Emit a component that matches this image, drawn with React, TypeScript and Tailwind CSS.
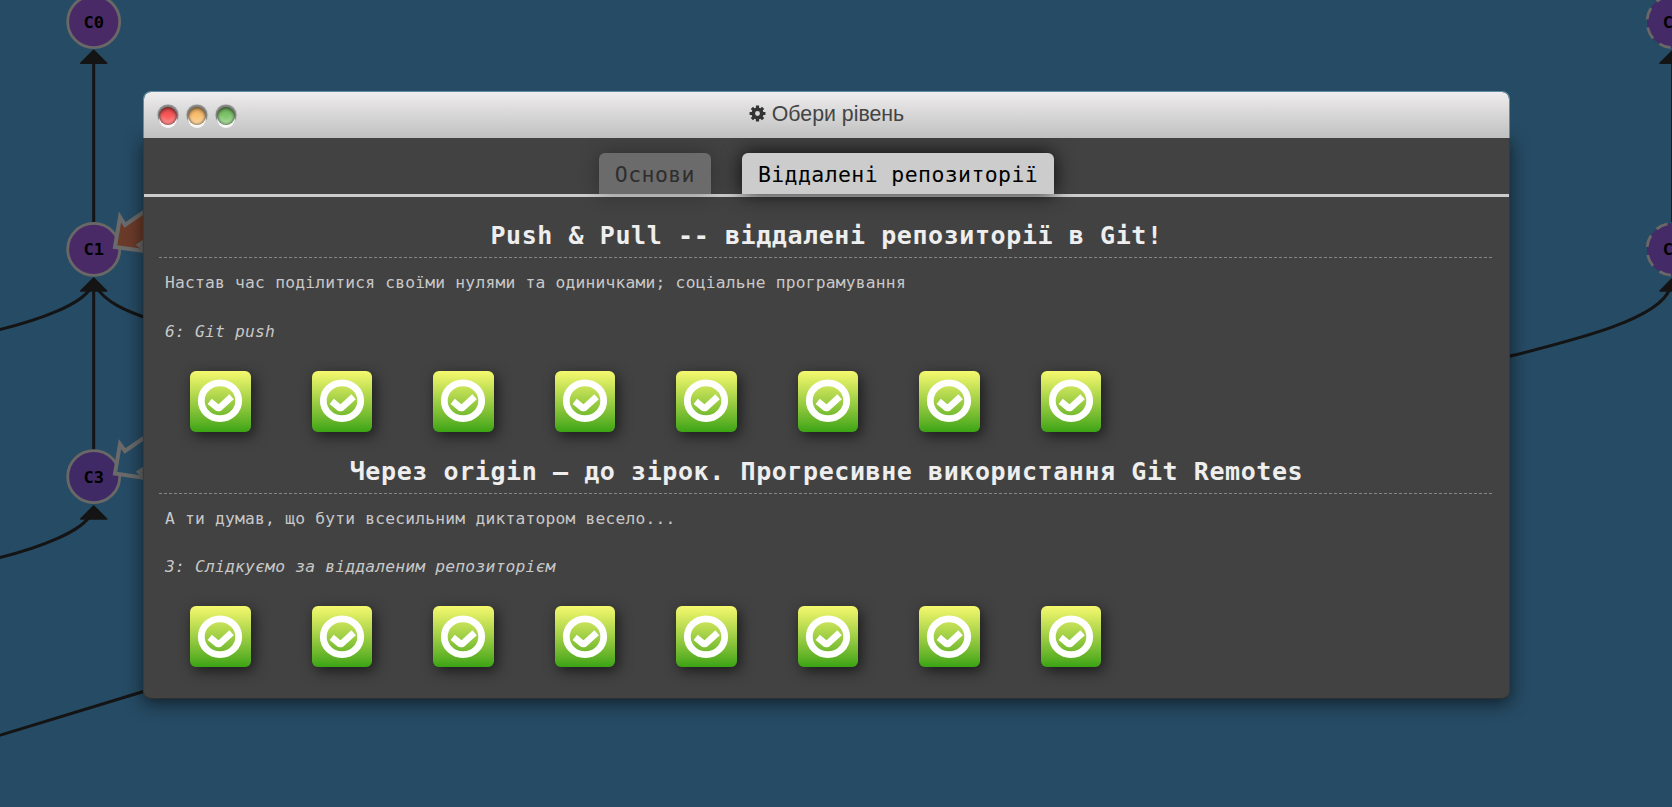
import React from "react";

const TABS = [
  { label: "Основи", active: false },
  { label: "Віддалені репозиторії", active: true },
];

const SERIES = [
  {
    title: "Push & Pull -- віддалені репозиторії в Git!",
    about: "Настав час поділитися своїми нулями та одиничками; соціальне програмування",
    status: "6: Git push",
    levels: 8,
  },
  {
    title: "Через origin – до зірок. Прогресивне використання Git Remotes",
    about: "А ти думав, що бути всесильним диктатором весело...",
    status: "3: Слідкуємо за віддаленим репозиторієм",
    levels: 8,
  },
];

type CommitProps = { x: number; y: number; label: string; fill: string; dashed?: boolean };

function Commit({ x, y, label, fill, dashed = false }: CommitProps) {
  return (
    <g>
      <circle cx={x} cy={y} r={26} fill={fill} stroke="#696867" strokeWidth={2.8} strokeDasharray={dashed ? "12 8.42" : undefined} strokeDashoffset={dashed ? -2 : undefined} />
      <text x={x} y={y + 6} textAnchor="middle" fontSize={15.5} fontWeight="bold" textLength={20.5} lengthAdjust="spacingAndGlyphs" fill="#000">
        {label}
      </text>
    </g>
  );
}

function Head({ x, y }: { x: number; y: number }) {
  return <path d={`M${x} ${y}L${x + 13} ${y + 13}H${x - 13}Z`} fill="#141414" stroke="#141414" strokeWidth={1.6} strokeLinejoin="round" />;
}

function Graph() {
  return (
    <svg className="absolute inset-0 h-[807px] w-[1672px] font-['DejaVu_Sans_Mono',monospace]" viewBox="0 0 1672 807">
      <g fill="none" stroke="#141414" strokeWidth={3}>
        <path d="M93.7 60V222M93.7 290V450" />
        <path d="M-4 330.5C40 320 83 304 91 287" />
        <path d="M96 287C106 302 125 311 150 319" />
        <path d="M-4 558.5C40 548 83 531 91 514" />
        <path d="M-4 736.5L150 689.5" />
        <path d="M1505 357.5C1570 341 1660 320 1670 288" />
        <path d="M1672.7 60V222" />
      </g>
      <Head x={93.7} y={50.3} />
      <Head x={93.7} y={278} />
      <Head x={93.7} y={506} />
      <Head x={1673} y={50.3} />
      <Head x={1673} y={278} />
      <Commit x={93.7} y={21.7} label="C0" fill="#4a2a66" />
      <Commit x={93.7} y={249.3} label="C1" fill="#4a2a66" />
      <Commit x={93.7} y={476.7} label="C3" fill="#402a66" />
      <Commit x={1673} y={21.7} label="C0" fill="#442a66" dashed />
      <Commit x={1673} y={249.3} label="C1" fill="#442a66" dashed />
      <path d="M152 206.5L125 225L120 217L115 247L152 252" fill="#6b3b2a" stroke="#6a6a6a" strokeWidth={4} />
      <path d="M152 236L139 245L150 255" fill="none" stroke="#6a6a6a" strokeWidth={4} />
      <path d="M152 432.5L125 451L120 444L115 473.5L152 479" fill="#264b64" stroke="#6a6a6a" strokeWidth={4} />
      <path d="M152 463L139 472L150 482" fill="none" stroke="#6a6a6a" strokeWidth={4} />
    </svg>
  );
}

function CheckTile() {
  return (
    <div className="flex h-[61.3px] w-[60.5px] items-center justify-center rounded-md bg-linear-to-b from-[#f6f96e] to-[#39a413] shadow-[3px_4px_14px_rgba(0,0,0,0.6)]">
      <svg className="size-[46px]" viewBox="0 0 46 46" fill="none" stroke="#fff">
        <ellipse cx="23" cy="22.7" rx="18.7" ry="17.9" strokeWidth="6.8" />
        <path d="M12.7 23.4L20.6 29.9H22.4L34.6 18.7" strokeWidth="6.6" strokeLinejoin="round" />
      </svg>
    </div>
  );
}

const TEETH = [0, 45, 90, 135];

function Cog() {
  return (
    <svg className="mb-1 size-[17px] text-[#333]" viewBox="0 0 18 18" stroke="currentColor" fill="none">
      <circle cx="9" cy="9" r="4.5" strokeWidth="3.8" />
      {TEETH.map((angle) => (
        <path key={angle} d="M9 .6V3.6M9 14.4V17.4" strokeWidth="3.4" transform={`rotate(${angle} 9 9)`} />
      ))}
    </svg>
  );
}

function Light({ color }: { color: string }) {
  return (
    <span
      className={`size-[18px] rounded-full ${color} shadow-[inset_0_2px_4px_rgba(0,0,0,0.45),inset_0_0_3px_rgba(0,0,0,0.6),inset_0_-5px_5px_rgba(255,255,255,0.35),0_3px_0_#f8f8f8,0_-1px_1px_1.5px_rgba(0,0,0,0.42)]`}
    />
  );
}

function TitleBar() {
  return (
    <div className="relative z-10 flex h-[47px] shrink-0 items-center justify-center rounded-t-lg border border-b-0 border-[#638aa3] bg-linear-to-b from-[#efedee] to-[#c0c0c0] bg-clip-padding">
      <div className="absolute top-[15px] left-[15px] flex gap-[11px]">
        <Light color="bg-[#fb5454]" />
        <Light color="bg-[#f9bd6c]" />
        <Light color="bg-[#7cc468]" />
      </div>
      <div className="flex items-center gap-1.5 font-['Liberation_Sans',Arial,sans-serif] text-[21.3px] text-[#444]">
        <Cog />
        <span>Обери рівень</span>
      </div>
    </div>
  );
}

function TabBar() {
  return (
    <div className="flex h-[59px] shrink-0 items-end justify-center gap-[31px] border-b-[3px] border-[#ccc]">
      {TABS.map((tab) => (
        <div
          key={tab.label}
          className={`flex h-[41px] items-center rounded-t-md px-4 pt-1 text-[21.5px] tracking-[0.4px] whitespace-pre ${
            tab.active
              ? "bg-[#ccc] text-black shadow-[0_0_20px_rgba(0,0,0,0.85)]"
              : "bg-[#6b6b6b] text-[#2e2e2e] shadow-[0_0_20px_rgba(0,0,0,0.3)]"
          }`}
        >
          {tab.label}
        </div>
      ))}
    </div>
  );
}

function DashedRule() {
  return <div className="h-px bg-[repeating-linear-gradient(90deg,#858585_0_3px,transparent_3px_5px)]" />;
}

function SeriesBlock({ title, about, status, levels }: (typeof SERIES)[number]) {
  return (
    <section className="h-[235.6px]">
      <h2 className="flex h-[39px] items-center justify-center pb-[3px] text-[25px] font-bold tracking-[0.58px] whitespace-pre text-[#eee]">{title}</h2>
      <DashedRule />
      <div className="px-1.5 text-[16.3px] tracking-[0.21px] whitespace-pre text-[#c8c8c8]">
        <p className="mt-[15px] leading-5">{about}</p>
        <p className="mt-[28.5px] leading-5 italic">{status}</p>
      </div>
      <div className="mt-[29px] flex gap-[61px] pl-[31px]">
        {Array.from({ length: levels }, (_, i) => (
          <CheckTile key={i} />
        ))}
      </div>
    </section>
  );
}

export default function App() {
  return (
    <div className="relative h-[807px] w-full overflow-hidden bg-[#264b64] font-['DejaVu_Sans_Mono',monospace]">
      <Graph />
      <div className="relative pt-[91px] pr-[162px] pl-[143px]">
        <TitleBar />
        <div className="flex h-[561px] flex-col rounded-b-lg border border-t-0 border-x-[#343b3f] border-b-[#303030] bg-[#424242] shadow-[0_4px_18px_rgba(0,0,0,0.6)]">
          <TabBar />
          <div className="flex flex-col pt-[21px] pr-[15px] pl-[15px]">
            {SERIES.map((s) => (
              <SeriesBlock key={s.title} {...s} />
            ))}
          </div>
        </div>
      </div>
    </div>
  );
}
